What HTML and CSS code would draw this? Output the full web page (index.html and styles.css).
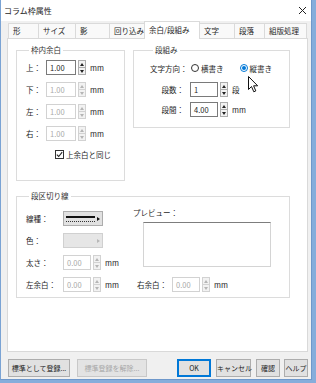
FILE: index.html
```html
<!DOCTYPE html>
<html lang="ja">
<head>
    <meta charset="UTF-8">
    <title>コラム枠属性</title>
    <link rel="stylesheet" href="styles.css">
</head>
<body>
    <div class="dialog">
        <div class="titlebar">
            <span>コラム枠属性</span>
            <svg class="close" width="9" height="9" viewBox="0 0 9 9"><path d="M1 1 L8 8 M8 1 L1 8" stroke="#222" stroke-width="1"/></svg>
        </div>

        <div class="tabs">
            <div class="tab t1">形</div>
            <div class="tab t2">サイズ</div>
            <div class="tab t3">影</div>
            <div class="tab t4">回り込み</div>
            <div class="tab t5 active">余白/段組み</div>
            <div class="tab t6">文字</div>
            <div class="tab t7">段落</div>
            <div class="tab t8">組版処理</div>
        </div>

        <div class="panel">
            <div class="top-row">
                <fieldset class="group group-margin">
                    <legend>枠内余白</legend>
                    <div class="field">
                        <span class="lbl lbl-a">上：</span>
                        <div class="input">1.00</div>
                        <div class="spin"><span class="up"></span><span class="down"></span></div>
                        <span class="unit">mm</span>
                    </div>
                    <div class="field">
                        <span class="lbl lbl-a">下：</span>
                        <div class="input disabled">1.00</div>
                        <div class="spin off"><span class="up"></span><span class="down"></span></div>
                        <span class="unit">mm</span>
                    </div>
                    <div class="field">
                        <span class="lbl lbl-a">左：</span>
                        <div class="input disabled">1.00</div>
                        <div class="spin off"><span class="up"></span><span class="down"></span></div>
                        <span class="unit">mm</span>
                    </div>
                    <div class="field">
                        <span class="lbl lbl-a">右：</span>
                        <div class="input disabled">1.00</div>
                        <div class="spin off"><span class="up"></span><span class="down"></span></div>
                        <span class="unit">mm</span>
                    </div>
                    <div class="check-row">
                        <span class="checkbox">
                            <svg width="7" height="7" viewBox="0 0 7 7"><path d="M0.8 3.6 L2.7 5.5 L6.2 1.2" fill="none" stroke="#222" stroke-width="1.1"/></svg>
                        </span>
                        <span>上余白と同じ</span>
                    </div>
                </fieldset>

                <fieldset class="group group-cols">
                    <legend>段組み</legend>
                    <div class="dir-row">
                        <span class="lbl-dir">文字方向：</span>
                        <span class="radio"></span>
                        <span class="radio-text">横書き</span>
                        <span class="radio on"></span>
                        <span class="radio-text">縦書き</span>
                    </div>
                    <div class="field field-b">
                        <span class="lbl lbl-b">段数：</span>
                        <div class="input short">1</div>
                        <div class="spin"><span class="up"></span><span class="down"></span></div>
                        <span class="unit">段</span>
                    </div>
                    <div class="field field-b2">
                        <span class="lbl lbl-b">段間：</span>
                        <div class="input short">4.00</div>
                        <div class="spin"><span class="up"></span><span class="down"></span></div>
                        <span class="unit">mm</span>
                    </div>
                </fieldset>
            </div>

            <fieldset class="group group-line">
                <legend>段区切り線</legend>
                <div class="line-body">
                    <div class="line-left">
                        <div class="field">
                            <span class="lbl lbl-c">線種：</span>
                            <div class="picker">
                                <div class="line-sample"></div>
                                <span class="tri"></span>
                            </div>
                        </div>
                        <div class="field">
                            <span class="lbl lbl-c">色：</span>
                            <div class="picker off">
                                <span class="tri"></span>
                            </div>
                        </div>
                        <div class="field">
                            <span class="lbl lbl-c">太さ：</span>
                            <div class="input short disabled">0.00</div>
                            <div class="spin off"><span class="up"></span><span class="down"></span></div>
                            <span class="unit">mm</span>
                        </div>
                    </div>
                    <div class="preview-col">
                        <div class="preview-label">プレビュー：</div>
                        <div class="preview"></div>
                    </div>
                </div>
                <div class="field">
                    <div class="half">
                        <span class="lbl lbl-c">左余白：</span>
                        <div class="input short disabled">0.00</div>
                        <div class="spin off"><span class="up"></span><span class="down"></span></div>
                        <span class="unit">mm</span>
                    </div>
                    <span class="lbl lbl-r">右余白：</span>
                    <div class="input short disabled">0.00</div>
                    <div class="spin off"><span class="up"></span><span class="down"></span></div>
                    <span class="unit">mm</span>
                </div>
            </fieldset>
        </div>

        <div class="buttons">
            <button class="btn b-reg">標準として登録...</button>
            <button class="btn b-unreg" disabled>標準登録を解除...</button>
            <button class="btn b-ok">OK</button>
            <button class="btn b-cancel">キャンセル</button>
            <button class="btn b-check">確認</button>
            <button class="btn b-help">ヘルプ</button>
        </div>

        <svg class="cursor" width="11" height="17" viewBox="0 0 11 17">
            <path d="M0.5 0.5 L0.5 13.5 L3.5 10.5 L5.8 15.8 L7.8 14.9 L5.6 9.8 L9.7 9.8 Z" fill="#fff" stroke="#111" stroke-width="1"/>
        </svg>
    </div>
</body>
</html>
```

FILE: styles.css
```css
* {
    box-sizing: border-box;
}

body {
    margin: 0;
    background-color: #86addb;
    font-family: "Noto Sans CJK JP", "Noto Sans", sans-serif;
    font-size: 7.5px;
    color: #1e1e1e;
}

.dialog {
    position: relative;
    width: 312px;
    height: 380px;
    background-color: #f0f0f0;
    border-left: 1px solid #7aa3d4;
    border-right: 1px solid #6f98cb;
    border-bottom: 1px solid #6f98cb;
    display: flex;
    flex-direction: column;
}

.titlebar {
    height: 21px;
    background-color: #fff;
    display: flex;
    align-items: center;
    justify-content: space-between;
    padding: 0 4px 0 3px;
    font-size: 8px;
}

/* tabs */
.tabs {
    display: flex;
    align-items: flex-end;
    height: 17px;
    margin-left: 7px;
}

.tab {
    height: 15px;
    border: 1px solid #dadada;
    border-bottom: none;
    margin-right: -1px;
    background-color: #f9f9f9;
    padding-left: 4px;
    line-height: 13px;
    white-space: nowrap;
}

.tab.active {
    height: 18px;
    background-color: #fff;
    margin-bottom: -1px;
    position: relative;
    z-index: 1;
    line-height: 15px;
}

.t1 { width: 31px; }
.t2 { width: 38px; }
.t3 { width: 35px; }
.t4 { width: 36px; }
.t5 { width: 56px; }
.t6 { width: 36px; }
.t7 { width: 31px; }
.t8 { width: 43px; }

/* panel */
.panel {
    margin-left: 6px;
    width: 301px;
    height: 314px;
    background-color: #fff;
    border: 1px solid #d9d9d9;
    padding: 6px 0 0 8px;
}

.top-row {
    display: flex;
    gap: 8px;
    align-items: flex-start;
    margin-bottom: 10px;
}

.group {
    margin: 0;
    padding: 0;
    min-width: 0;
    border: 1px solid #dcdcdc;
}

.group legend {
    padding: 0 2px;
    margin-left: 3px;
    line-height: 10px;
    color: #333;
}

.group-margin {
    width: 109px;
    height: 136px;
    padding: 5px 0 0 9px;
}

.group-cols {
    width: 157px;
    height: 83px;
    padding: 7px 0 0 16px;
}

.group-line {
    width: 274px;
    height: 107px;
    padding: 10px 0 0 9px;
}

.field {
    display: flex;
    align-items: center;
    height: 15px;
    margin-bottom: 7px;
    white-space: nowrap;
}

.lbl-a { width: 20px; }
.lbl-c { width: 37px; }
.lbl-r { width: 35px; }

.lbl-b {
    width: 40px;
    text-align: right;
    padding-right: 6px;
}

.input {
    width: 30px;
    height: 15px;
    border: 1px solid #7a7a7a;
    background-color: #fff;
    padding-left: 3px;
    line-height: 13px;
}

.input.short { width: 28px; }

.input.disabled {
    border-color: #d2d2d2;
    color: #a9a9a9;
}

.spin {
    width: 8px;
    height: 15px;
    margin-left: 2px;
    display: flex;
    flex-direction: column;
    border: 1px solid #acacac;
    background-color: #f2f2f2;
}

.spin span {
    flex: 1;
    position: relative;
}

.spin .up {
    border-bottom: 1px solid #acacac;
}

.spin span::after {
    content: "";
    position: absolute;
    left: 1px;
    top: 2px;
    border-left: 2px solid transparent;
    border-right: 2px solid transparent;
}

.spin .up::after {
    border-bottom: 3px solid #222;
}

.spin .down::after {
    top: 2px;
    border-top: 3px solid #222;
}

.spin.off {
    border-color: #d2d2d2;
}

.spin.off .up {
    border-color: #d2d2d2;
}

.spin.off .up::after { border-bottom-color: #b5b5b5; }
.spin.off .down::after { border-top-color: #b5b5b5; }

.unit {
    margin-left: 4px;
}

.check-row {
    display: flex;
    align-items: center;
    height: 12px;
    margin-top: 7px;
    padding-left: 29px;
}

.checkbox {
    width: 9px;
    height: 9px;
    border: 1px solid #333;
    margin-right: 2px;
    display: flex;
    align-items: center;
    justify-content: center;
}

/* 段組み */
.dir-row {
    display: flex;
    align-items: center;
    height: 12px;
    margin-bottom: 8px;
    white-space: nowrap;
}

.lbl-dir {
    width: 41px;
}

.radio {
    width: 8px;
    height: 8px;
    border-radius: 50%;
    border: 1px solid #333;
    background-color: #fff;
    position: relative;
}

.radio.on {
    border-color: #0078d7;
    margin-left: 16px;
}

.radio.on::after {
    content: "";
    position: absolute;
    left: 1px;
    top: 1px;
    width: 4px;
    height: 4px;
    border-radius: 50%;
    background-color: #0078d7;
}

.radio-text {
    margin-left: 2px;
}

.field-b {
    margin-bottom: 5px;
}

/* 段区切り線 */
.line-body {
    display: flex;
}

.line-left {
    width: 107px;
}

.picker {
    width: 40px;
    height: 15px;
    border: 1px solid #adadad;
    background-color: #e1e1e1;
    display: flex;
    align-items: center;
    padding: 0 2px;
}

.picker.off {
    border-color: #d0d0d0;
    background-color: #e6e6e6;
    justify-content: flex-end;
}

.line-sample {
    width: 30px;
    height: 6px;
    border-top: 2px solid #111;
    border-bottom: 1px dotted #333;
}

.tri {
    margin-left: 2px;
    border-top: 2.5px solid transparent;
    border-bottom: 2.5px solid transparent;
    border-left: 3px solid #111;
}

.picker.off .tri {
    border-left-color: #b8b8b8;
}

.preview-col {
    margin-top: -3px;
}

.preview-label {
    line-height: 10px;
}

.preview {
    width: 128px;
    height: 45px;
    margin: 4px 0 0 10px;
    border: 1px solid #d4d4d4;
    border-top: 1px solid #7d7d7d;
}

.half {
    display: flex;
    align-items: center;
    width: 111px;
}

/* bottom buttons */
.buttons {
    display: flex;
    margin-top: 7px;
    padding-left: 7px;
}

.btn {
    height: 18px;
    margin: 0;
    padding: 0;
    border: 1px solid #adadad;
    background-color: #e1e1e1;
    font-family: inherit;
    font-size: 7px;
    color: #1e1e1e;
    white-space: nowrap;
}

.btn:disabled {
    border-color: #c8c8c8;
    background-color: #e3e3e3;
    color: #a8a8a8;
}

.b-reg { width: 62px; }
.b-unreg { width: 70px; margin-left: 7px; }
.b-ok { width: 34px; margin-left: 30px; border: 1px solid #0078d7; box-shadow: inset 0 0 0 1px #0078d7; }
.b-cancel { width: 35px; margin-left: 5px; }
.b-check { width: 24px; margin-left: 5px; }
.b-help { width: 24px; margin-left: 4px; }

.cursor {
    position: absolute;
    left: 247px;
    top: 76px;
}
```
